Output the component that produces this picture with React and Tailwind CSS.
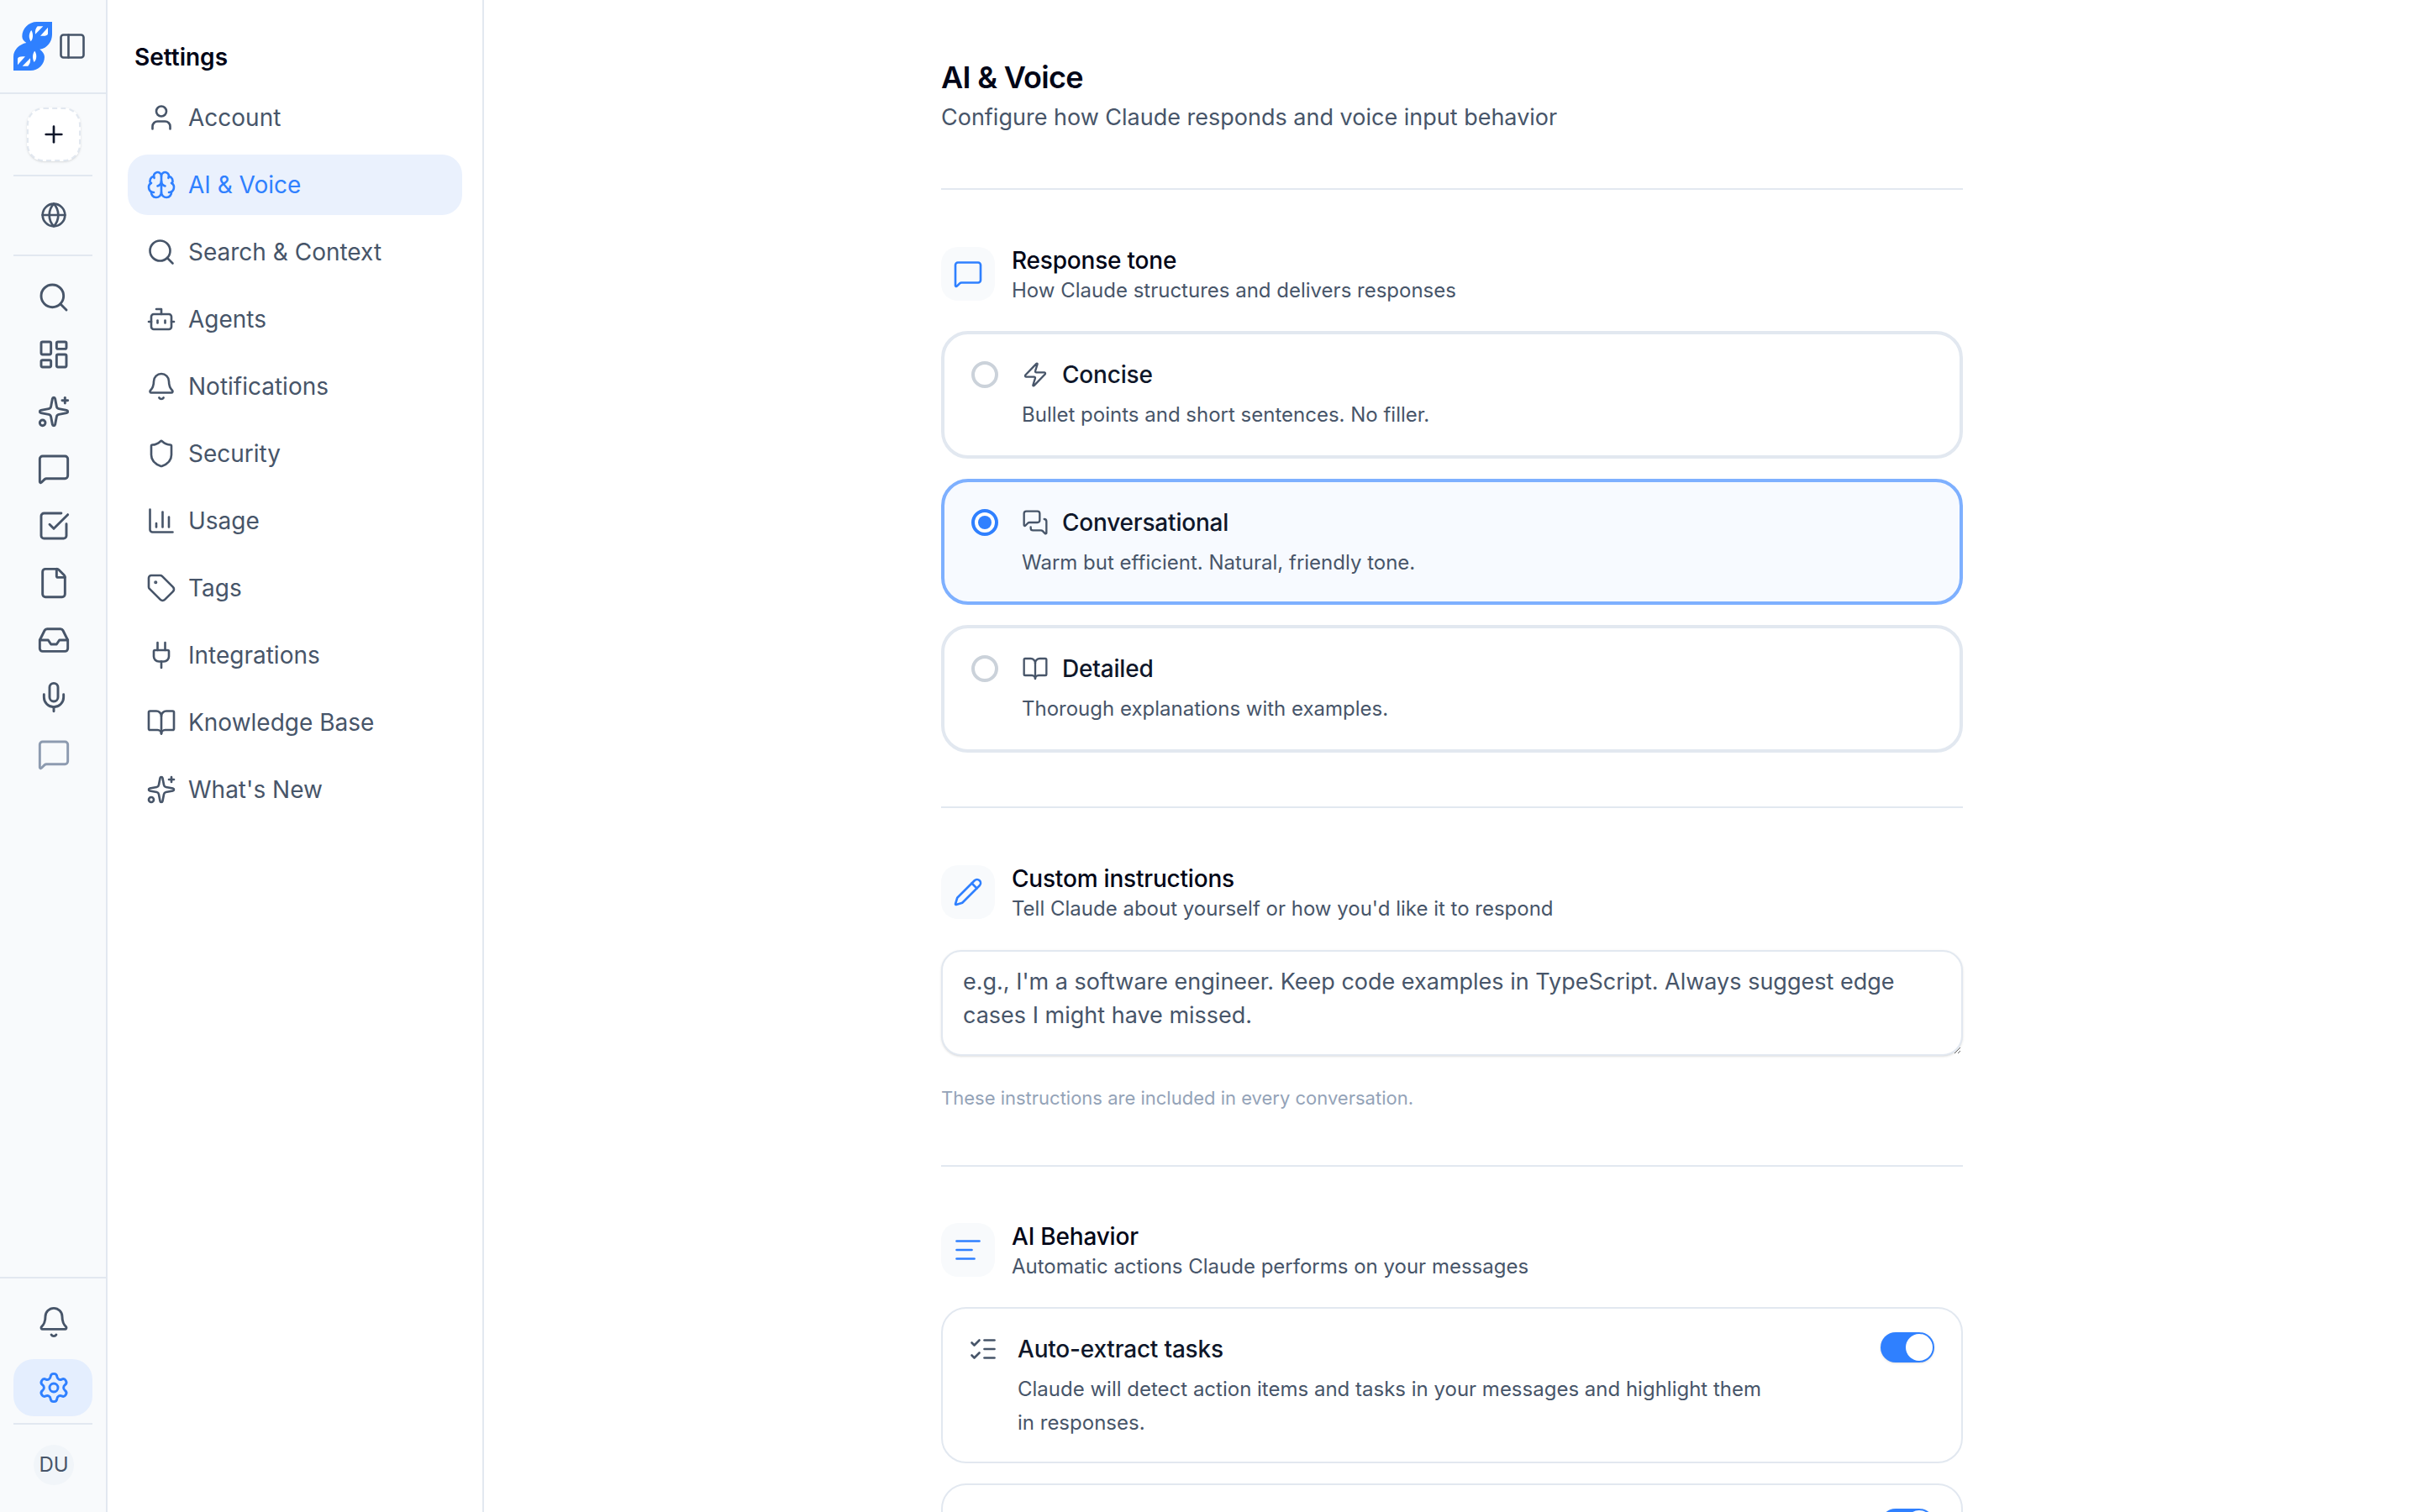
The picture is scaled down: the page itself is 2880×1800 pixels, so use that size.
import {
  AlignLeft,
  Bell,
  BookOpen,
  Bot,
  Brain,
  ChartColumn,
  File,
  Globe,
  Inbox,
  LayoutDashboard,
  ListChecks,
  MessageSquare,
  MessagesSquare,
  Mic,
  PanelLeft,
  Pencil,
  Plug,
  Plus,
  Search,
  Settings,
  Shield,
  Sparkles,
  SquareCheckBig,
  Tag,
  User,
  Zap,
} from "lucide-react"

const railIcons = [Search, LayoutDashboard, Sparkles, MessageSquare, SquareCheckBig, File, Inbox, Mic]

const navItems = [
  { label: "Account", icon: User },
  { label: "AI & Voice", icon: Brain, active: true },
  { label: "Search & Context", icon: Search },
  { label: "Agents", icon: Bot },
  { label: "Notifications", icon: Bell },
  { label: "Security", icon: Shield },
  { label: "Usage", icon: ChartColumn },
  { label: "Tags", icon: Tag },
  { label: "Integrations", icon: Plug },
  { label: "Knowledge Base", icon: BookOpen },
  { label: "What's New", icon: Sparkles },
]

const tones = [
  { name: "Concise", desc: "Bullet points and short sentences. No filler.", icon: Zap },
  { name: "Conversational", desc: "Warm but efficient. Natural, friendly tone.", icon: MessagesSquare, selected: true },
  { name: "Detailed", desc: "Thorough explanations with examples.", icon: BookOpen },
]

function Logo() {
  return (
    <svg viewBox="24 30 138 174" className="w-[46px] h-[58px] shrink-0">
      <path
        d="M162 30H108C78 30 55 54 55 82C55 92 60 98 70 105C45 110 24 130 24 155V204H85C113 204 135 182 135 155C135 145 128 135 118 128C145 125 162 100 162 75Z"
        fill="#2f80ff"
      />
      <g fill="#fff">
        <path d="M110 46H130L102 74C100 62 104 52 110 46Z" />
        <path d="M147 50V72C147 78 138 82 120 80Z" />
        <path d="M88 60C78 72 78 88 86 100C95 90 95 72 88 60Z" />
        <g transform="rotate(180 93 117)">
          <path d="M110 46H130L102 74C100 62 104 52 110 46Z" />
          <path d="M147 50V72C147 78 138 82 120 80Z" />
          <path d="M88 60C78 72 78 88 86 100C95 90 95 72 88 60Z" />
        </g>
      </g>
    </svg>
  )
}

function Rail() {
  return (
    <aside className="w-[128px] shrink-0 h-full flex flex-col bg-[#f8fafc] border-r-2 border-[#e2e8f0]">
      <div className="h-[112px] shrink-0 flex items-center pl-4 gap-[6px] border-b-2 border-[#e2e8f0] w-[126px]">
        <Logo />
        <PanelLeft size={36} strokeWidth={1.75} className="text-[#475569] shrink-0" />
      </div>

      <div className="w-[128px] flex justify-center mt-4">
        <button
          type="button"
          className="w-16 h-16 flex items-center justify-center bg-white rounded-[20px] border-2 border-dashed border-[#e2e8f0] shadow-sm text-[#0f172a]"
        >
          <Plus size={32} strokeWidth={2} />
        </button>
      </div>
      <div className="ml-4 w-[94px] h-[2px] bg-[#e2e8f0] mt-4" />
      <div className="w-[128px] h-[93px] pb-[1px] flex items-center justify-center text-[#475569]">
        <Globe size={32} strokeWidth={2} />
      </div>
      <div className="ml-4 w-[94px] h-[2px] bg-[#e2e8f0]" />

      <div className="w-[128px] mt-[15px] flex flex-col">
        {railIcons.map((Icon, i) => (
          <div key={i} className="h-[68px] flex items-center justify-center text-[#475569]">
            <Icon size={40} strokeWidth={1.75} />
          </div>
        ))}
        <div className="h-[68px] flex items-center justify-center text-[#8d9bb0]">
          <MessageSquare size={40} strokeWidth={1.75} />
        </div>
      </div>

      <div className="mt-auto border-t-2 border-[#e2e8f0] pt-[18px] w-[126px]">
        <div className="w-[128px] h-[68px] flex items-center justify-center text-[#475569]">
          <Bell size={40} strokeWidth={1.75} />
        </div>
        <div className="mt-[10px] ml-4 w-[94px] h-[68px] rounded-[24px] bg-[#e4eefe] flex items-center justify-center text-[#2f80ff] pl-[2px]">
          <Settings size={40} strokeWidth={1.75} />
        </div>
        <div className="ml-4 w-[94px] h-[2px] bg-[#e2e8f0] mt-2" />
        <div className="w-[128px] flex justify-center mt-6 mb-8">
          <div className="w-12 h-12 rounded-full bg-[#f1f5f9] flex items-center justify-center text-[24px] text-[#475569]">
            DU
          </div>
        </div>
      </div>
    </aside>
  )
}

function SettingsNav() {
  return (
    <nav className="w-[448px] shrink-0 h-full bg-white border-r-2 border-[#e2e8f0] px-6 pt-12">
      <h2 className="pl-2 text-[28px] leading-10 font-semibold text-[#020617]">Settings</h2>
      <div className="mt-4 flex flex-col gap-2">
        {navItems.map((item) => (
          <div
            key={item.label}
            className={
              item.active
                ? "h-[72px] rounded-[24px] bg-[#eaf1fd] flex items-center pl-[22px] gap-[14px] text-[#2f80ff] text-[28px]"
                : "h-[72px] rounded-[24px] flex items-center pl-[22px] gap-[14px] text-[#475569] text-[28px]"
            }
          >
            <item.icon size={36} strokeWidth={1.75} className="shrink-0" />
            <span>{item.label}</span>
          </div>
        ))}
      </div>
    </nav>
  )
}

function SectionHeader({ icon: Icon, title, desc }) {
  return (
    <div className="flex gap-5 h-16">
      <div className="w-16 h-16 shrink-0 rounded-[20px] bg-[#f8fafc] flex items-center justify-center text-[#2f80ff]">
        <Icon size={36} strokeWidth={1.75} />
      </div>
      <div>
        <div className="text-[28px] leading-8 font-medium tracking-[-0.2px] text-[#020617]">{title}</div>
        <div className="text-[24px] leading-9 mt-[2px] text-[#475569]">{desc}</div>
      </div>
    </div>
  )
}

function ToneCard({ tone }) {
  return (
    <div
      className={
        tone.selected
          ? "h-[150px] rounded-[32px] border-4 border-[#7eb0ff] bg-[#f7faff] p-8 flex gap-7"
          : "h-[152px] rounded-[32px] border-4 border-[#e2e8f0] bg-white p-8 flex gap-7"
      }
    >
      {tone.selected ? (
        <div className="w-8 h-8 shrink-0 rounded-full border-4 border-[#2f80ff] bg-white flex items-center justify-center">
          <div className="w-4 h-4 rounded-full bg-[#2f80ff]" />
        </div>
      ) : (
        <div className="w-8 h-8 shrink-0 rounded-full border-4 border-[#cbd2da] bg-white" />
      )}
      <div>
        <div className="flex items-center gap-4 h-8">
          <tone.icon size={32} strokeWidth={1.75} className="text-[#475569]" />
          <span className="text-[28px] font-medium tracking-[-0.2px] text-[#0f172a]">{tone.name}</span>
        </div>
        <div className="mt-4 text-[24px] leading-8 text-[#475569]">{tone.desc}</div>
      </div>
    </div>
  )
}

function Toggle() {
  return (
    <div className="w-16 h-9 shrink-0 rounded-full bg-[#2f80ff] flex justify-end items-center p-[2px] shadow-sm">
      <div className="w-8 h-8 rounded-full bg-white" />
    </div>
  )
}

export default function App() {
  return (
    <div className="h-screen flex overflow-hidden bg-white font-[Inter,sans-serif]">
      <Rail />
      <SettingsNav />
      <main className="flex-1 h-full overflow-hidden">
        <div className="w-[1216px] mx-auto pt-16">
          <h1 className="text-[36px] leading-14 font-semibold tracking-[-0.7px] text-[#020617]">AI &amp; Voice</h1>
          <p className="text-[27px] leading-10 text-[#475569]">Configure how Claude responds and voice input behavior</p>
          <div className="h-[2px] bg-[#e2e8f0] mt-16" />

          <section className="pt-[68px]">
            <SectionHeader icon={MessageSquare} title="Response tone" desc="How Claude structures and delivers responses" />
            <div className="mt-9 flex flex-col gap-6">
              {tones.map((t) => (
                <ToneCard key={t.name} tone={t} />
              ))}
            </div>
          </section>
          <div className="h-[2px] bg-[#e2e8f0] mt-16" />

          <section className="pt-[68px]">
            <SectionHeader icon={Pencil} title="Custom instructions" desc="Tell Claude about yourself or how you'd like it to respond" />
            <textarea
              defaultValue="e.g., I'm a software engineer. Keep code examples in TypeScript. Always suggest edge cases I might have missed."
              className="mt-[37px] block w-full h-[126px] rounded-[24px] border-2 border-[#e2e8f0] bg-white px-6 py-4 text-[27px] leading-10 text-[#475569] shadow-sm outline-none"
            />
            <p className="mt-8 text-[22px] leading-9 text-[#94a3b8]">These instructions are included in every conversation.</p>
          </section>
          <div className="h-[2px] bg-[#e2e8f0] mt-[62px]" />

          <section className="pt-[67px]">
            <SectionHeader icon={AlignLeft} title="AI Behavior" desc="Automatic actions Claude performs on your messages" />
            <div className="mt-9 flex flex-col gap-6">
              <div className="h-[186px] rounded-[30px] border-2 border-[#e2e8f0] pl-[30px] pr-8 pt-7 flex justify-between">
                <div className="mt-[2px]">
                  <div className="flex items-center gap-[23px] h-9">
                    <ListChecks size={36} strokeWidth={1.75} className="text-[#475569]" />
                    <span className="text-[28px] font-medium tracking-[-0.2px] text-[#0f172a]">Auto-extract tasks</span>
                  </div>
                  <p className="ml-[59px] mt-[10px] max-w-[900px] text-[24px] leading-10 text-[#475569]">
                    Claude will detect action items and tasks in your messages and highlight them in responses.
                  </p>
                </div>
                <Toggle />
              </div>
              <div className="h-[186px] rounded-[30px] border-2 border-[#e2e8f0] pl-[30px] pr-8 pt-7 flex justify-end">
                <Toggle />
              </div>
            </div>
          </section>
        </div>
      </main>
    </div>
  )
}
